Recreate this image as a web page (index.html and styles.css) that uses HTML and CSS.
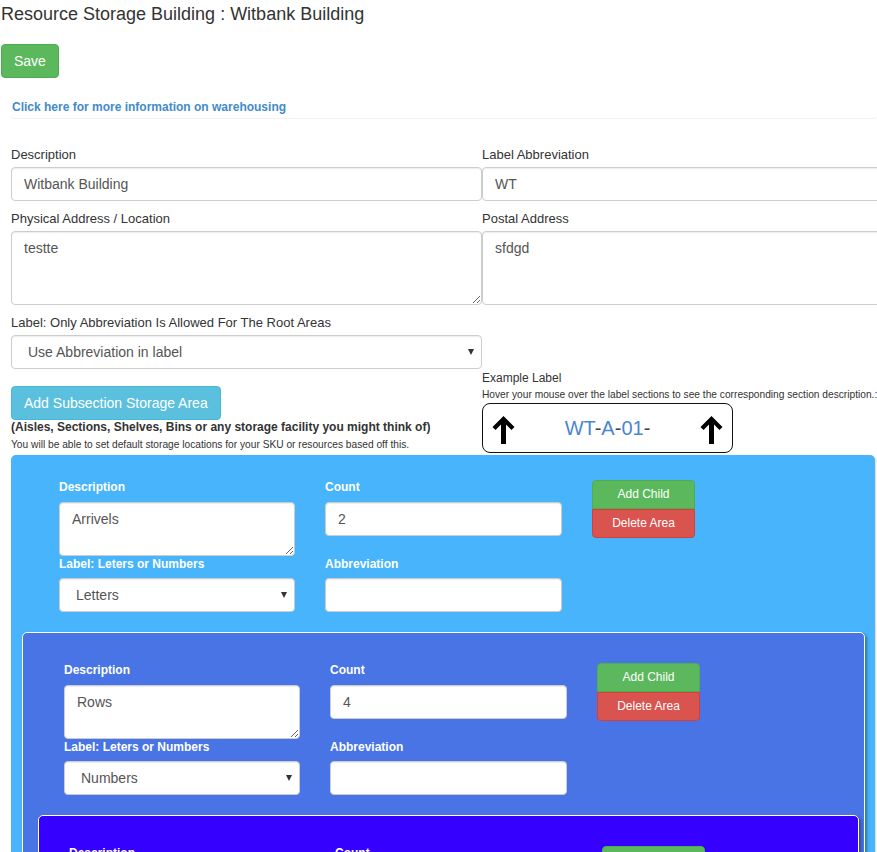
FILE: index.html
```html
<!DOCTYPE html>
<html lang="en">

<head>
    <meta charset="UTF-8">
    <meta name="viewport" content="width=device-width, initial-scale=1.0">
    <title>Resource Storage Building</title>
    <link rel="stylesheet" href="styles.css">
</head>

<body>
    <h4 class="page-title">Resource Storage Building : Witbank Building</h4>
    <button class="btn btn-success btn-save">Save</button>
    <div class="info-bar">
        <a href="#">Click here for more information on warehousing</a>
    </div>

    <div class="building-form">
        <!-- building details -->
        <div class="form-grid">
            <div class="form-group">
                <label>Description</label>
                <input class="form-control" value="Witbank Building">
            </div>
            <div class="form-group">
                <label>Label Abbreviation</label>
                <input class="form-control" value="WT">
            </div>
            <div class="form-group">
                <label>Physical Address / Location</label>
                <textarea class="form-control addr">testte</textarea>
            </div>
            <div class="form-group">
                <label>Postal Address</label>
                <textarea class="form-control addr">sfdgd</textarea>
            </div>
            <div class="form-group last">
                <label>Label: Only Abbreviation Is Allowed For The Root Areas</label>
                <div class="select-wrap">
                    <select class="form-control">
                        <option>Use Abbreviation in label</option>
                    </select>
                </div>
            </div>
            <div></div>
            <div class="sub-intro">
                <button class="btn btn-info">Add Subsection Storage Area</button>
                <p class="sub-note">(Aisles, Sections, Shelves, Bins or any storage facility you might think of)</p>
                <p class="sub-help">You will be able to set default storage locations for your SKU or resources based off this.</p>
            </div>
            <div class="example">
                <p class="example-title">Example Label</p>
                <p class="example-help">Hover your mouse over the label sections to see the corresponding section description.:</p>
                <div class="label-box">
                    <svg class="arrow" viewBox="0 0 22 28"><path d="M11 0 L22 11 L19 14 L13.5 8.5 V28 H8.5 V8.5 L3 14 L0 11 Z" /></svg>
                    <span class="label-code"><span class="seg">WT</span><span class="sep">-</span><span class="seg">A</span><span class="sep">-</span><span class="seg">01</span><span class="sep">-</span></span>
                    <svg class="arrow" viewBox="0 0 22 28"><path d="M11 0 L22 11 L19 14 L13.5 8.5 V28 H8.5 V8.5 L3 14 L0 11 Z" /></svg>
                </div>
            </div>
        </div>

        <!-- storage areas -->
        <div class="area level-1">
            <div class="area-fields">
                <div class="field">
                    <label>Description</label>
                    <textarea class="form-control">Arrivels</textarea>
                </div>
                <div class="field">
                    <label>Count</label>
                    <input class="form-control" value="2">
                </div>
                <div class="area-btns">
                    <button class="btn btn-success">Add Child</button>
                    <button class="btn btn-danger">Delete Area</button>
                </div>
                <div class="field">
                    <label>Label: Leters or Numbers</label>
                    <div class="select-wrap">
                        <select class="form-control">
                            <option>Letters</option>
                        </select>
                    </div>
                </div>
                <div class="field">
                    <label>Abbreviation</label>
                    <input class="form-control" value="">
                </div>
            </div>

            <div class="area level-2">
                <div class="area-fields">
                    <div class="field">
                        <label>Description</label>
                        <textarea class="form-control">Rows</textarea>
                    </div>
                    <div class="field">
                        <label>Count</label>
                        <input class="form-control" value="4">
                    </div>
                    <div class="area-btns">
                        <button class="btn btn-success">Add Child</button>
                        <button class="btn btn-danger">Delete Area</button>
                    </div>
                    <div class="field">
                        <label>Label: Leters or Numbers</label>
                        <div class="select-wrap">
                            <select class="form-control">
                                <option>Numbers</option>
                            </select>
                        </div>
                    </div>
                    <div class="field">
                        <label>Abbreviation</label>
                        <input class="form-control" value="">
                    </div>
                </div>

                <div class="area level-3">
                    <div class="area-fields">
                        <div class="field">
                            <label>Description</label>
                            <textarea class="form-control">Shelves</textarea>
                        </div>
                        <div class="field">
                            <label>Count</label>
                            <input class="form-control" value="3">
                        </div>
                        <div class="area-btns">
                            <button class="btn btn-success">Add Child</button>
                            <button class="btn btn-danger">Delete Area</button>
                        </div>
                        <div class="field">
                            <label>Label: Leters or Numbers</label>
                            <div class="select-wrap">
                                <select class="form-control">
                                    <option>Numbers</option>
                                </select>
                            </div>
                        </div>
                        <div class="field">
                            <label>Abbreviation</label>
                            <input class="form-control" value="">
                        </div>
                    </div>
                </div>
            </div>
        </div>
    </div>
</body>

</html>
```

FILE: styles.css
```css
html,
body {
    overflow-x: hidden;
}

body {
    margin: 0;
    font-family: "Liberation Sans", Arial, sans-serif;
    font-size: 14px;
    color: #333;
}

p {
    margin: 0;
}

.page-title {
    margin: 4px 0 0 1px;
    font-size: 18px;
    font-weight: normal;
    line-height: 20px;
}

/* buttons */
.btn {
    display: inline-block;
    font-family: inherit;
    font-size: 14px;
    line-height: 20px;
    padding: 6px 12px;
    border: 1px solid transparent;
    border-radius: 4px;
    color: #fff;
    cursor: pointer;
}

.btn-success {
    background: #5cb85c;
    border-color: #4cae4c;
}

.btn-danger {
    background: #d9534f;
    border-color: #d43f3a;
}

.btn-info {
    background: #5bc0de;
    border-color: #46b8da;
}

.btn-save {
    display: block;
    margin: 20px 0 0 1px;
}

.info-bar {
    margin: 20px 0 0 11px;
    padding: 0 1px 3px;
    line-height: 16px;
    border-radius: 4px;
    box-shadow: 0 1px 1px rgba(0, 0, 0, .06);
}

.info-bar a {
    font-size: 12px;
    font-weight: bold;
    line-height: 16px;
    color: #428bca;
    text-decoration: none;
}

/* form */
.building-form {
    width: 864px;
    margin: 28px 0 0 11px;
}

.form-grid {
    display: grid;
    grid-template-columns: 471px 471px;
}

.form-group {
    margin-bottom: 9px;
}

.form-group.last {
    margin-bottom: 0;
}

.form-group label {
    display: block;
    font-size: 13px;
    line-height: 18px;
    margin-bottom: 3px;
}

.form-control {
    display: block;
    box-sizing: border-box;
    width: 100%;
    height: 34px;
    margin: 0;
    padding: 6px 12px;
    font-family: inherit;
    font-size: 14px;
    line-height: 20px;
    color: #555;
    background: #fff;
    border: 1px solid #ccc;
    border-radius: 4px;
    box-shadow: inset 0 1px 1px rgba(0, 0, 0, .075);
}

textarea.form-control {
    height: 54px;
}

textarea.addr {
    height: 74px;
}

select.form-control {
    appearance: none;
    -webkit-appearance: none;
    padding-left: 16px;
}

.select-wrap {
    position: relative;
}

.select-wrap::after {
    content: "";
    position: absolute;
    right: 8px;
    top: 14px;
    border-left: 3.5px solid transparent;
    border-right: 3.5px solid transparent;
    border-top: 6px solid #333;
}

.sub-intro {
    padding-top: 17px;
}

.sub-note {
    font-size: 12px;
    font-weight: bold;
    line-height: 15px;
}

.sub-help {
    margin-top: 3px;
    font-size: 10.2px;
    line-height: 13px;
}

.example-title {
    margin-top: 1px;
    font-size: 12px;
    line-height: 16px;
}

.example-help {
    margin-top: 2px;
    font-size: 10.2px;
    line-height: 14px;
    white-space: nowrap;
}

.label-box {
    display: flex;
    align-items: center;
    justify-content: space-between;
    box-sizing: border-box;
    width: 251px;
    height: 50px;
    margin-top: 1px;
    padding: 4px 9px 0;
    border: 1px solid #111;
    border-radius: 8px;
}

.label-box .arrow {
    width: 23px;
    height: 28px;
    fill: #000;
}

.label-code {
    font-size: 20px;
    margin-top: -4px;
}

.label-code .seg {
    color: #4a86cf;
}

.label-code .sep {
    color: #444;
}

/* storage areas */
.area {
    border-radius: 5px;
}

.area-fields {
    display: grid;
    grid-template-columns: 236px 237px 103px;
    column-gap: 30px;
    align-items: start;
}

.area-fields label {
    display: block;
    font-size: 12px;
    font-weight: bold;
    line-height: 16px;
    color: #fff;
    margin-bottom: 6px;
}

.area-fields .field:first-child label,
.area-fields .field:nth-child(2) label {
    margin-bottom: 7px;
}

.area-btns {
    grid-column: 3;
    grid-row: 1 / span 2;
    margin-top: 1px;
}

.area-btns .btn {
    display: block;
    width: 103px;
    font-size: 12px;
    line-height: 17px;
    padding: 5px 0;
    border-radius: 0;
}

.area-btns .btn-success {
    border-radius: 4px 4px 0 0;
}

.area-btns .btn-danger {
    border-radius: 0 0 4px 4px;
}

.level-1 {
    margin-top: 2px;
    padding: 24px 10px 40px 11px;
    background: #47b4fc;
    box-shadow: 1px 1px 2px rgba(0, 0, 0, .15);
}

.level-1 > .area-fields {
    padding-left: 37px;
}

.level-2 {
    margin-top: 20px;
    padding: 29px 5px 40px 15px;
    background: #4874e6;
    border: 1px solid #fff;
    box-shadow: 2px 2px 3px rgba(0, 0, 0, .35);
}

.level-2 > .area-fields {
    margin-left: -15px;
    padding-left: 41px;
}

.level-3 {
    margin-top: 20px;
    padding: 29px 0 40px 0;
    background: #3600ff;
    border: 1px solid #fff;
    box-shadow: 2px 2px 3px rgba(0, 0, 0, .35);
}

.level-3 > .area-fields {
    padding-left: 30px;
}
```
